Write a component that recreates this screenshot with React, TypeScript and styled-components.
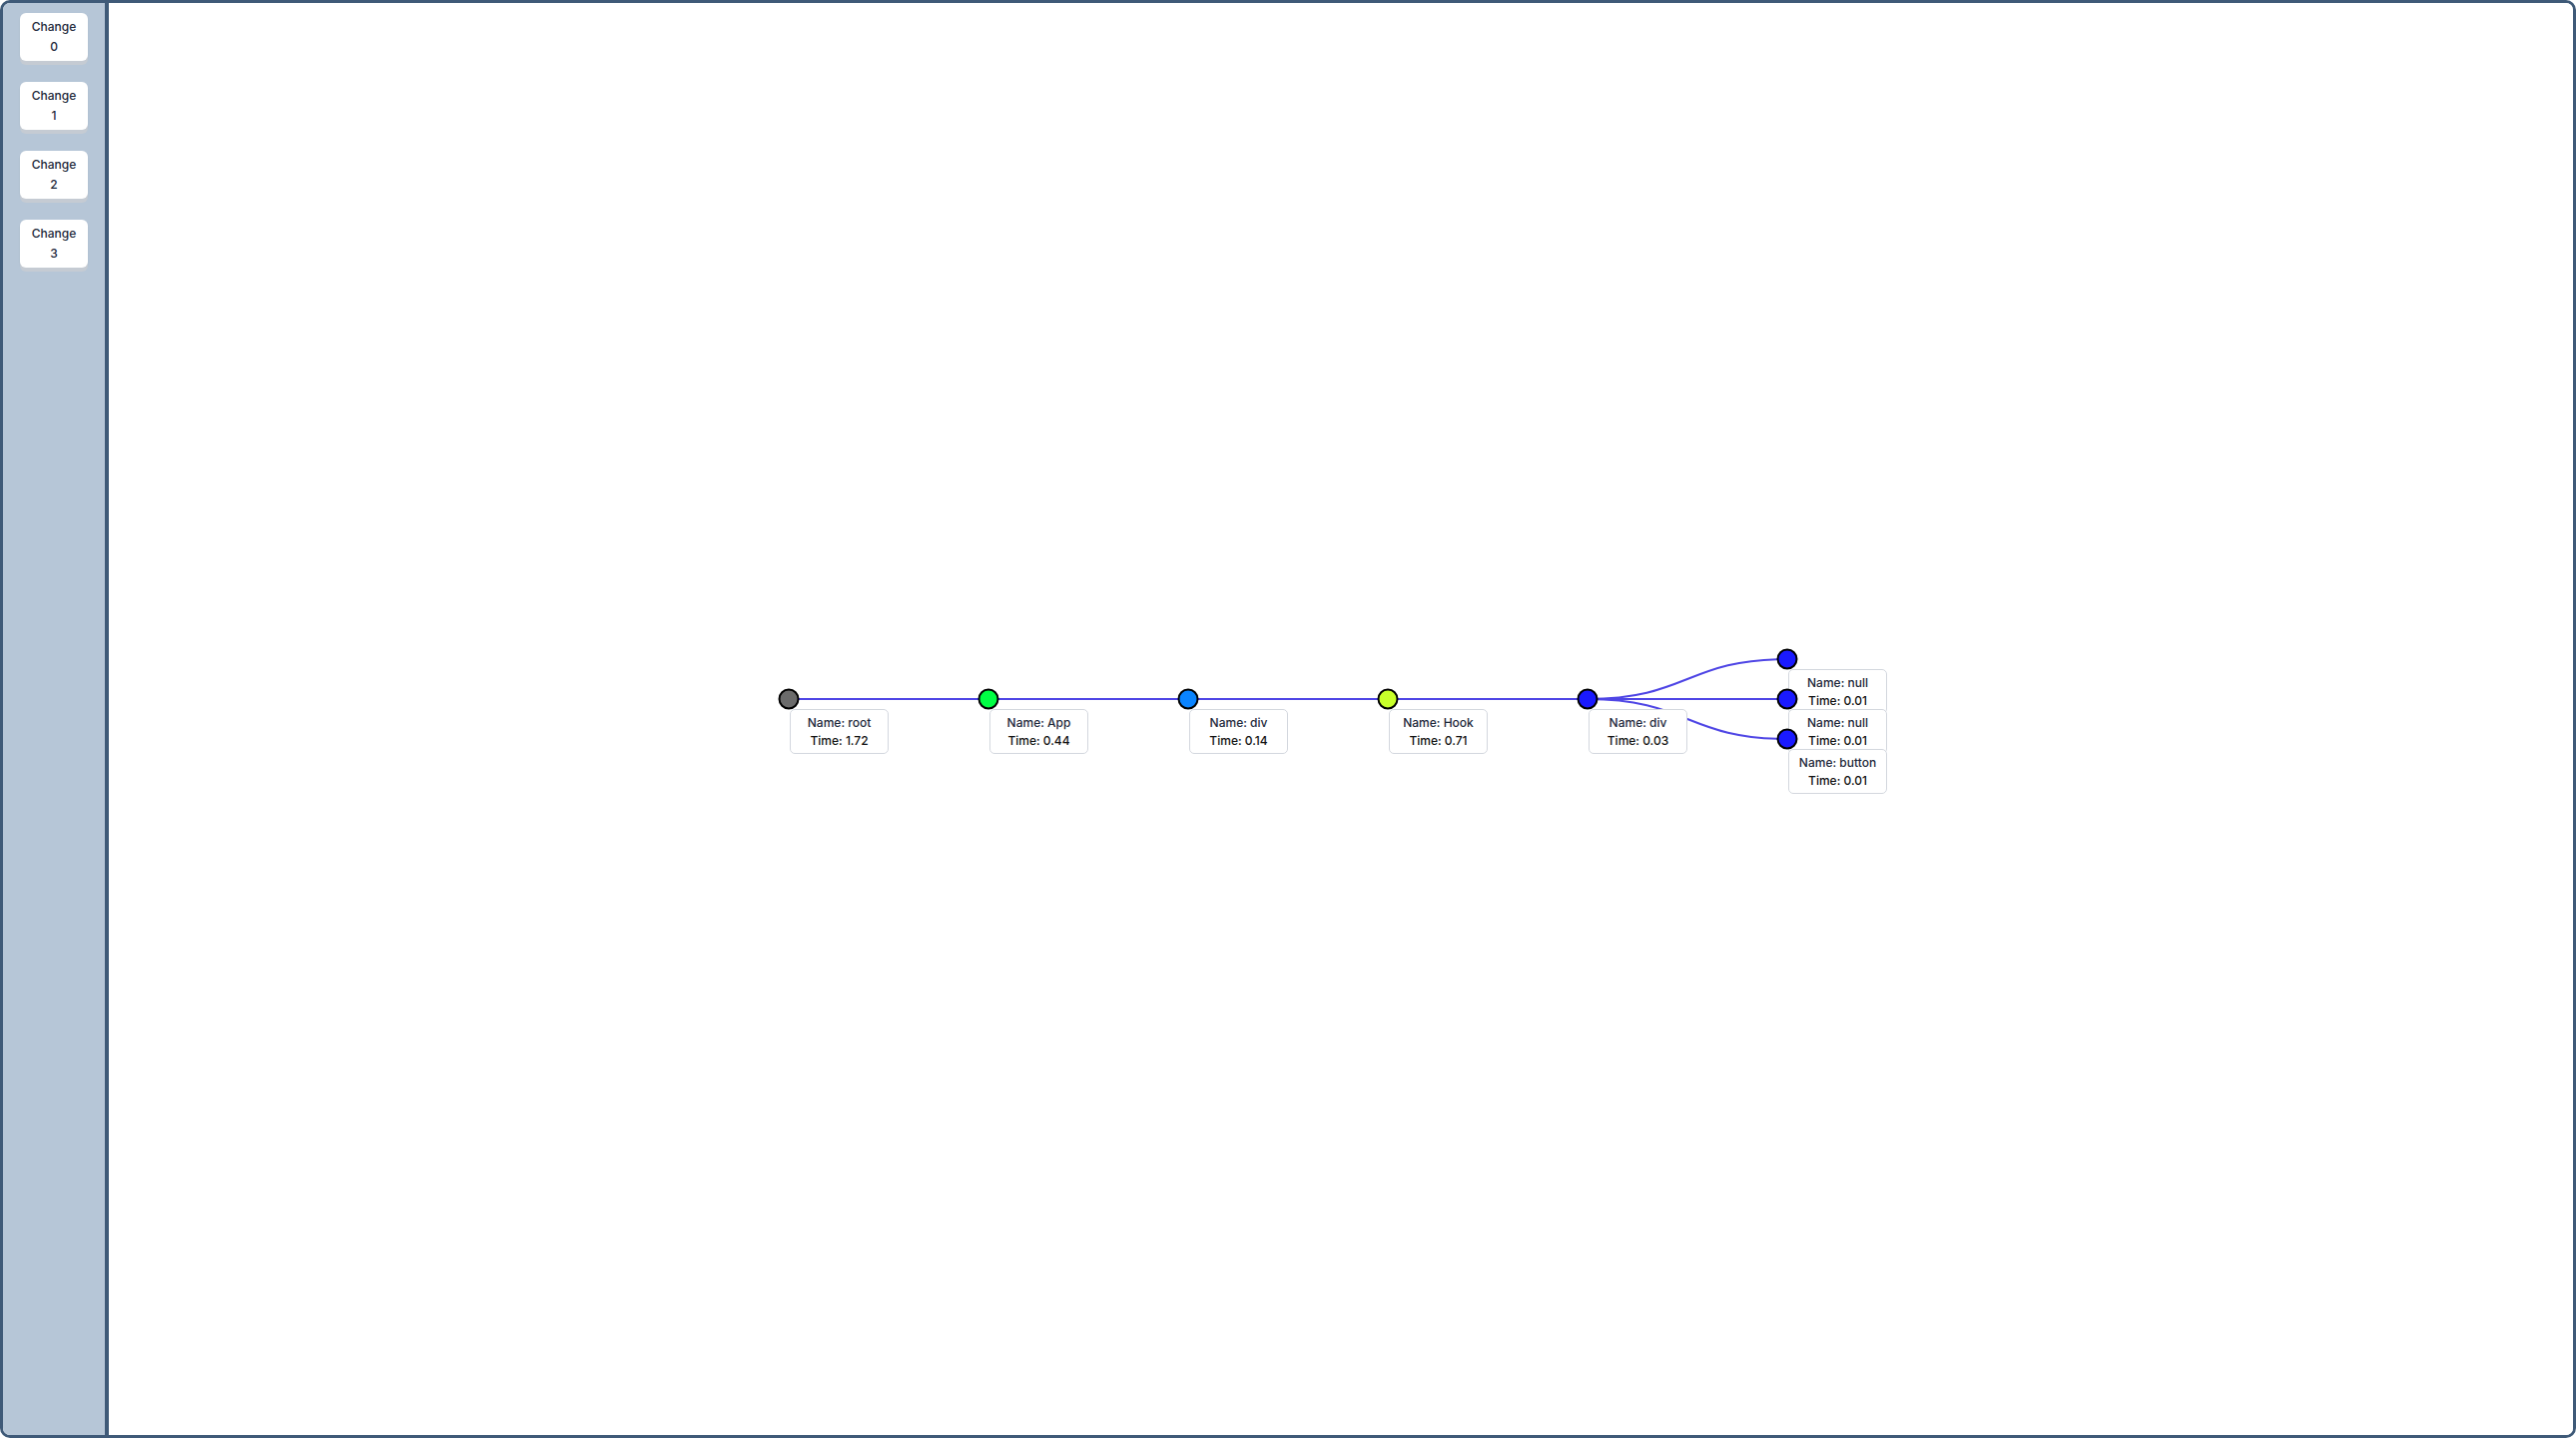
import styled, { createGlobalStyle } from "styled-components";

const GlobalStyle = createGlobalStyle`
  html, body {
    margin: 0;
    padding: 0;
    background: #ffffff;
    font-family: Inter, "Liberation Sans", Arial, sans-serif;
  }
  * {
    box-sizing: border-box;
  }
`;

interface TreeNode {
    name: string;
    time: string;
    color: string;
    children?: TreeNode[];
}

const tree: TreeNode = {
    name: "root",
    time: "1.72",
    color: "#6b6b6b",
    children: [
        {
            name: "App",
            time: "0.44",
            color: "#00ff44",
            children: [
                {
                    name: "div",
                    time: "0.14",
                    color: "#0a84ff",
                    children: [
                        {
                            name: "Hook",
                            time: "0.71",
                            color: "#c8ff2a",
                            children: [
                                {
                                    name: "div",
                                    time: "0.03",
                                    color: "#1a1aff",
                                    children: [
                                        { name: "null", time: "0.01", color: "#1a1aff" },
                                        { name: "null", time: "0.01", color: "#1a1aff" },
                                        { name: "button", time: "0.01", color: "#1a1aff" },
                                    ],
                                },
                            ],
                        },
                    ],
                },
            ],
        },
    ],
};

const DEPTH_GAP = 200;
const SIBLING_GAP = 40;

interface PlacedNode {
    node: TreeNode;
    x: number;
    y: number;
}

interface PlacedLink {
    from: PlacedNode;
    to: PlacedNode;
}

// simple layout: children spread evenly around the parent's y
function layout(root: TreeNode) {
    const nodes: PlacedNode[] = [];
    const links: PlacedLink[] = [];

    const walk = (node: TreeNode, depth: number, y: number) => {
        const placed = { node, x: depth * DEPTH_GAP, y };
        nodes.push(placed);
        const kids = node.children || [];
        kids.forEach((child, i) => {
            const childY = y + (i - (kids.length - 1) / 2) * SIBLING_GAP;
            const childPlaced = walk(child, depth + 1, childY);
            links.push({ from: placed, to: childPlaced });
        });
        return placed;
    };

    walk(root, 0, 0);
    return { nodes, links };
}

const Frame = styled.div`
  display: flex;
  width: 100vw;
  height: 100vh;
  border: 3px solid #3f5a78;
  border-radius: 10px;
  overflow: hidden;
`;

const Sidebar = styled.aside`
  display: flex;
  flex-direction: column;
  align-items: center;
  gap: 21px;
  flex: 0 0 106px;
  padding-top: 10px;
  background: #b6c6d7;
  border-right: 4px solid #3f5a78;
`;

const ChangeButton = styled.button`
  width: 68px;
  padding: 4px 8px;
  border: none;
  border-radius: 6px;
  background: #ffffff;
  box-shadow: 0 4px 0 #c5cbd3, 0 1px 2px rgba(0, 0, 0, 0.08);
  font-family: Inter, "Liberation Sans", Arial, sans-serif;
  font-size: 12px;
  font-weight: 500;
  line-height: 20px;
  color: #1e293b;
  text-align: center;
  cursor: pointer;
`;

const Canvas = styled.main`
  flex: 1;
  position: relative;
  background: #ffffff;
`;

const TreeSvg = styled.svg`
  display: block;
  width: 100%;
  height: 100%;
`;

const Link = styled.path`
  fill: none;
  stroke: #4f46e5;
  stroke-width: 2px;
`;

const Dot = styled.circle`
  stroke: #000000;
  stroke-width: 2px;
`;

const Label = styled.div`
  width: 99px;
  height: 45px;
  padding: 4px 0;
  border: 1px solid #d3d7de;
  border-radius: 5px;
  background: #ffffff;
  font-family: Inter, "Liberation Sans", Arial, sans-serif;
  font-size: 12px;
  font-weight: 500;
  line-height: 18px;
  text-align: center;
  white-space: nowrap;
`;

const LabelName = styled.div`
  color: #1e293b;
`;

const LabelTime = styled.div`
  color: #111111;
`;

function linkPath({ from, to }: PlacedLink) {
    const mid = (from.x + to.x) / 2;
    return `M${from.x},${from.y}C${mid},${from.y} ${mid},${to.y} ${to.x},${to.y}`;
}

export default function App() {
    const { nodes, links } = layout(tree);

    return (
        <>
            <GlobalStyle />
            <Frame>
                <Sidebar>
                    {[0, 1, 2, 3].map((i) => (
                        <ChangeButton key={i}>Change {i}</ChangeButton>
                    ))}
                </Sidebar>
                <Canvas>
                    <TreeSvg>
                        <g transform="translate(681,697)">
                            {links.map((link, i) => (
                                <Link key={i} d={linkPath(link)} />
                            ))}
                            {nodes.map((n, i) => (
                                <g key={i} transform={`translate(${n.x},${n.y})`}>
                                    <Dot r={9.5} fill={n.node.color} />
                                    <foreignObject x={1} y={10} width={99} height={45}>
                                        <Label>
                                            <LabelName>Name: {n.node.name}</LabelName>
                                            <LabelTime>Time: {n.node.time}</LabelTime>
                                        </Label>
                                    </foreignObject>
                                </g>
                            ))}
                        </g>
                    </TreeSvg>
                </Canvas>
            </Frame>
        </>
    );
}
